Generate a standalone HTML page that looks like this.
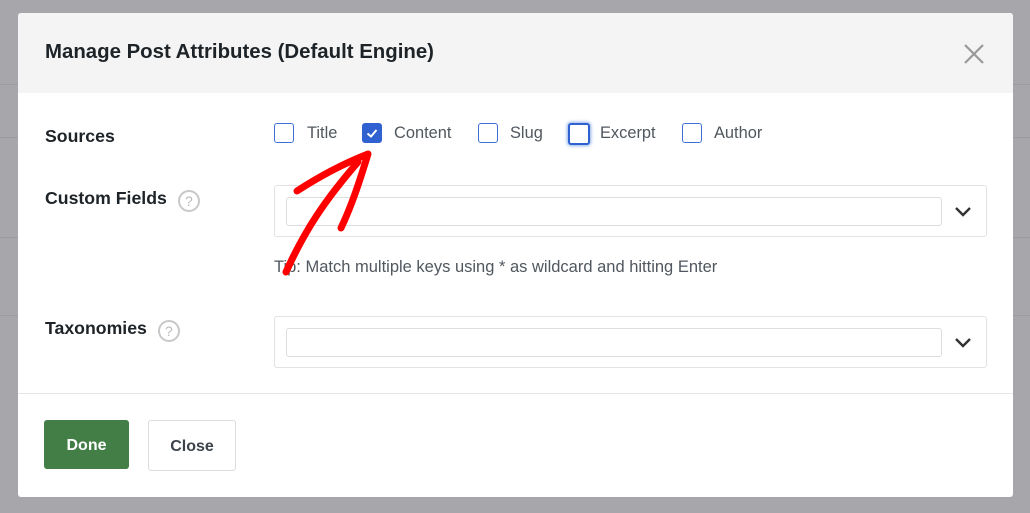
<!DOCTYPE html>
<html><head><style>
body{margin:0;width:1030px;height:513px;background:#a7a7ab;font-family:"Liberation Sans",sans-serif;position:relative;overflow:hidden}
.bgline{position:absolute;left:0;width:1030px;height:1px;background:#9c9ca0}
.modal{position:absolute;left:18px;top:13px;width:995px;height:484px;background:#fff;border-radius:3px}
.hdr{position:absolute;left:0;top:0;width:995px;height:80px;background:#f4f4f4;border-radius:3px 3px 0 0}
.title{position:absolute;left:27px;top:28px;font-size:20.4px;font-weight:bold;color:#1d2327}
.lbl{position:absolute;left:27px;font-size:17.7px;font-weight:bold;color:#1d2327}
.q{display:inline-block;width:18px;height:18px;border:2px solid #c8c8c8;border-radius:50%;color:#bbb;font-size:14px;text-align:center;line-height:18px;font-weight:normal;margin-left:11px;vertical-align:-2px}
.cb{position:absolute;top:110px;width:18px;height:18px;border:1.5px solid #3b6fd4;border-radius:3px;background:#fff}
.ct{position:absolute;top:111px;font-size:16.4px;color:#50575e}
.box{position:absolute;left:256px;width:711px;height:50px;border:1px solid #e2e2e2;border-radius:3px}
.inp{position:absolute;left:11px;top:11px;width:654px;height:27px;border:1px solid #ddd;border-radius:3px}
.chev{position:absolute;left:678px;top:17px}
.btn{position:absolute;top:407px;height:49px;border-radius:3px;font-size:16px;font-weight:bold;text-align:center;line-height:51px}
</style></head><body>
<div class="bgline" style="top:84px"></div>
<div class="bgline" style="top:137px"></div>
<div class="bgline" style="top:237px"></div>
<div class="bgline" style="top:315px"></div>
<div class="modal">
<div class="hdr"></div>
<div class="title">Manage Post Attributes (Default Engine)</div>
<svg style="position:absolute;left:945px;top:30px" width="22" height="22"><path d="M2 2L20 20M20 2L2 20" stroke="#999" stroke-width="2.2"/></svg>
<div style="position:absolute;left:0;top:380px;width:995px;height:1px;background:#e6e6e6"></div>
<div class="lbl" style="top:113px">Sources</div>
<div class="lbl" style="top:175px">Custom Fields<span class="q">?</span></div>
<div class="lbl" style="top:305px">Taxonomies<span class="q">?</span></div>
<div class="cb" style="left:256px"></div><div class="ct" style="left:289px">Title</div>
<div class="cb" style="left:344px;background:#2f62d0;border-color:#2f62d0"><svg width="18" height="18"><path d="M4.5 9.5L8 12.5L13.5 6" stroke="#fff" stroke-width="2" fill="none"/></svg></div><div class="ct" style="left:376px">Content</div>
<div class="cb" style="left:460px"></div><div class="ct" style="left:492px">Slug</div>
<div class="cb" style="left:550px;box-shadow:0 0 3px 1px #8fb0ea;border-color:#2f62d0;border-width:2px"></div><div class="ct" style="left:582px">Excerpt</div>
<div class="cb" style="left:664px"></div><div class="ct" style="left:696px">Author</div>
<div class="box" style="top:172px"><div class="inp"></div><svg class="chev" width="20" height="16"><path d="M3 5L10 12L17 5" stroke="#333" stroke-width="2.4" fill="none"/></svg></div>
<div style="position:absolute;left:256px;top:245px;font-size:16.5px;color:#50575e">Tip: Match multiple keys using * as wildcard and hitting Enter</div>
<div class="box" style="top:303px"><div class="inp"></div><svg class="chev" width="20" height="16"><path d="M3 5L10 12L17 5" stroke="#333" stroke-width="2.4" fill="none"/></svg></div>
<div class="btn" style="left:26px;width:85px;background:#437e47;color:#fff">Done</div>
<div class="btn" style="left:130px;width:86px;border:1px solid #ddd;height:49px;color:#3c434a;background:#fff">Close</div>
</div>
<svg style="position:absolute;left:0;top:0" width="1030" height="513"><g stroke="#f00" stroke-width="7" stroke-linecap="round" stroke-linejoin="round" fill="none"><path d="M286 272C305 230 325 200 358 162"/><path d="M297 191C320 176 345 163 368 154C360 180 352 205 341 228"/></g></svg>
</body></html>
